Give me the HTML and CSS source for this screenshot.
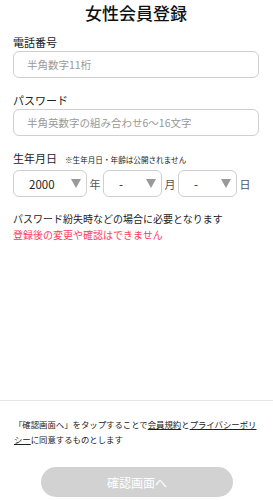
FILE: index.html
```html
<!DOCTYPE html>
<html lang="ja">
<head>
<meta charset="utf-8">
<link rel="stylesheet" href="styles.css">
</head>
<body>
<div class="page">
  <main class="form">
    <h1 class="title">女性会員登録</h1>
    <div class="field">
      <div class="label">電話番号</div>
      <div class="input"><span class="ph">半角数字11桁</span></div>
    </div>
    <div class="field">
      <div class="label">パスワード</div>
      <div class="input"><span class="ph">半角英数字の組み合わせ6〜16文字</span></div>
    </div>
    <div class="field">
      <div class="label">生年月日<span class="note">※生年月日・年齢は公開されません</span></div>
      <div class="dob">
        <div class="select year"><span class="val">2000</span><span class="tri"></span></div>
        <span class="unit">年</span>
        <div class="select md"><span class="val">-</span><span class="tri"></span></div>
        <span class="unit">月</span>
        <div class="select md"><span class="val">-</span><span class="tri"></span></div>
        <span class="unit">日</span>
      </div>
    </div>
    <p class="info">パスワード紛失時などの場合に必要となります<br><span class="warn">登録後の変更や確認はできません</span></p>
  </main>
  <footer class="footer">
    <p class="terms">「確認画面へ」をタップすることで<span class="link">会員規約</span>と<span class="link">プライバシーポリシー</span>に同意するものとします</p>
    <div class="btn">確認画面へ</div>
  </footer>
</div>
</body>
</html>
```
FILE: styles.css
```css
* { box-sizing: border-box; }
html, body { margin: 0; padding: 0; }
body {
  font-family: "Noto Sans CJK JP", "Noto Sans", sans-serif;
  color: #222;
  background: #fff;
}
.page {
  height: 500px;
  display: flex;
  flex-direction: column;
}
.form {
  flex: 1;
  padding: 0 14px 0 13px;
}
.title {
  margin: 0;
  padding-top: 1px;
  font-size: 17px;
  line-height: 24px;
  font-weight: 500;
  text-align: center;
  color: #111;
}
.field { margin-top: 10px; }
.field + .field { margin-top: 15px; }
.label {
  font-size: 11px;
  line-height: 14px;
  color: #222;
  display: flex;
  align-items: baseline;
}
.note {
  font-size: 7.6px;
  margin-left: 8px;
  color: #222222;
}
.input {
  margin-top: 2px;
  height: 27px;
  border: 1px solid #cfcfcf;
  border-radius: 6px;
  display: flex;
  align-items: center;
  padding-left: 13px;
}
.ph {
  font-size: 10.5px;
  color: #999;
}
.dob {
  margin-top: 3px;
  display: flex;
  align-items: center;
}
.select {
  height: 27px;
  border: 1px solid #cfcfcf;
  border-radius: 6px;
  display: flex;
  align-items: center;
  justify-content: space-between;
  padding: 0 5px 0 15px;
}
.year { width: 74px; }
.md { width: 59px; }
.val { font-size: 11.5px; color: #222; }
.tri {
  width: 0; height: 0;
  border-left: 5px solid transparent;
  border-right: 5px solid transparent;
  border-top: 9px solid #999;
}
.unit {
  font-size: 11px;
  color: #555;
  width: 16px;
  text-align: center;
}
.info {
  margin: 14px 0 0;
  font-size: 10px;
  line-height: 16px;
  color: #222;
}
.warn { color: #ff3b5c; }
.footer {
  border-top: 1px solid #e6e6e6;
  padding: 16px 13px 3px 14px;
  display: flex;
  flex-direction: column;
  align-items: center;
}
.terms {
  margin: 0;
  font-size: 8.4px;
  line-height: 15px;
  color: #222;
  align-self: stretch;
}
.link {
  text-decoration: underline;
  text-underline-offset: 1px;
}
.btn {
  margin-top: 20px;
  width: 192px;
  height: 30px;
  border-radius: 15px;
  background: #d2d2d2;
  color: #fff;
  font-size: 12px;
  display: flex;
  align-items: center;
  justify-content: center;
}
```
